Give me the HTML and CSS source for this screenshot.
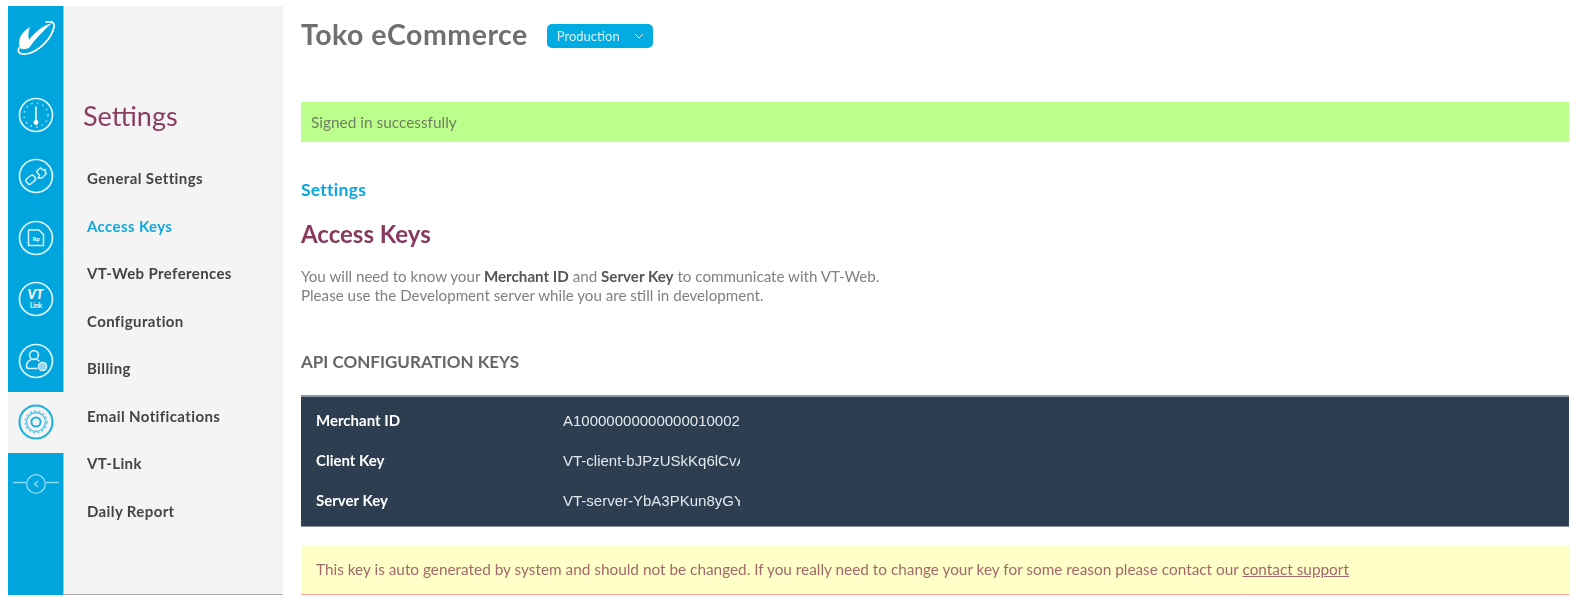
FILE: index.html
```html
<!DOCTYPE html>
<html lang="en">
<head>
<meta charset="utf-8">
<title>Toko eCommerce - Access Keys</title>
<link rel="stylesheet" href="styles.css">
</head>
<body>
<div class="app">
  <nav class="rail">
    <div class="rail-logo">
      <svg class="logo" viewBox="0 0 38 34" fill="none" stroke="#fff" stroke-linecap="round">
        <path d="M2 27 C0 31 3 34 9 33 C22 31 35 17 37 6 C38 1 34 0 29 1" stroke-width="1.7"/>
        <path d="M3 27 C0 20 4 11 13 6 C11 10 11 15 12 19 C18 11 25 5 35 2 C27 9 19 17 12 27 C9 28 5 29 3 27 Z" fill="#fff" stroke="none"/>
      </svg>
    </div>
    <a class="rail-item">
      <svg class="icon" viewBox="0 0 36 36" fill="none" stroke="#d8f5ff">
        <circle cx="18" cy="18" r="16.5" stroke-width="1.7"/>
        <circle cx="18" cy="18" r="12" stroke-width="1.3" stroke-dasharray="1.6 4.1" opacity=".85"/>
        <path d="M18 9.5 V24" stroke-width="1.7"/>
        <circle cx="18" cy="25.5" r="2.4" fill="#fff" stroke="none"/>
      </svg>
    </a>
    <a class="rail-item">
      <svg class="icon" viewBox="0 0 36 36" fill="none" stroke="#d8f5ff">
        <circle cx="18" cy="18" r="16.5" stroke-width="1.7"/>
        <rect x="8" y="18.5" width="9.5" height="6.5" rx="2.4" stroke-width="1.5" transform="rotate(-40 12.7 21.7)"/>
        <path d="M18.5 13.5 L22.5 9.8 L25 12 L27.5 11.5 L27 14 L28.5 15.5 L24 20 L20 20 L21.5 17.5 Z" stroke-width="1.4" stroke-linejoin="round"/>
      </svg>
    </a>
    <a class="rail-item">
      <svg class="icon" viewBox="0 0 36 36" fill="none" stroke="#d8f5ff">
        <circle cx="18" cy="18" r="16.5" stroke-width="1.7"/>
        <path d="M10.5 10 H21 L25.5 14.5 V25.5 H10.5 Z" stroke-width="1.5" stroke-linejoin="round"/>
        <text x="18" y="21" class="icon-mini">Rp</text>
      </svg>
    </a>
    <a class="rail-item">
      <svg class="icon" viewBox="0 0 36 36" fill="none" stroke="#d8f5ff">
        <circle cx="18" cy="18" r="16.5" stroke-width="1.7"/>
        <text x="17.5" y="18" class="icon-vt">VT</text>
        <text x="18" y="26.5" class="icon-link">Link</text>
      </svg>
    </a>
    <a class="rail-item">
      <svg class="icon" viewBox="0 0 36 36" fill="none" stroke="#d8f5ff">
        <circle cx="18" cy="18" r="16.5" stroke-width="1.7"/>
        <circle cx="16" cy="12" r="4.4" stroke-width="1.6"/>
        <path d="M19.5 25.5 H10.5 Q8.5 25.5 8.5 23 Q9 18 13 16.8 M19 16.8 Q20.5 17.3 21.5 18.3" stroke-width="1.6"/>
        <circle cx="24.5" cy="23.5" r="4.2" fill="#8fd8f0" stroke="#d8f5ff" stroke-width="1.2"/>
      </svg>
    </a>
    <a class="rail-item is-active">
      <svg class="icon" viewBox="0 0 36 36" fill="none" stroke="#1fb0e0">
        <circle cx="18" cy="18" r="16.5" stroke-width="2.1"/>
        <circle cx="18" cy="18" r="10.8" stroke-width="1.6" stroke-dasharray="2.4 2" opacity=".6"/>
        <circle cx="18" cy="18" r="9.4" stroke-width="1.2" opacity=".8"/>
        <circle cx="18" cy="18" r="4.6" stroke-width="2"/>
      </svg>
    </a>
    <a class="rail-item">
      <svg class="icon-back" viewBox="0 0 46 20" fill="none" stroke="#8fdcf5" stroke-width="1.3">
        <path d="M0 8.5 H13 M33 8.5 H46"/>
        <circle cx="23" cy="10" r="9.3"/>
        <path d="M25 7 L21.5 10 L25 13" stroke-width="1.4"/>
      </svg>
    </a>
  </nav>

  <aside class="side">
    <h2 class="side-title">Settings</h2>
    <ul class="side-nav">
      <li>General Settings</li>
      <li class="is-current">Access Keys</li>
      <li>VT-Web Preferences</li>
      <li>Configuration</li>
      <li>Billing</li>
      <li>Email Notifications</li>
      <li>VT-Link</li>
      <li>Daily Report</li>
    </ul>
  </aside>

  <main class="main">
    <header class="top">
      <h1 class="brand">Toko eCommerce</h1>
      <button class="env">Production
        <svg class="chev" viewBox="0 0 10 6" fill="none" stroke="#fff" stroke-width="1"><path d="M1 1 L5 5 L9 1"/></svg>
      </button>
    </header>
    <div class="flash">Signed in successfully</div>
    <div class="crumb">Settings</div>
    <h2 class="title">Access Keys</h2>
    <p class="intro">You will need to know your <b>Merchant ID</b> and <b>Server Key</b> to communicate with VT-Web.<br>Please use the Development server while you are still in development.</p>
    <h3 class="section">API CONFIGURATION KEYS</h3>
    <div class="keys">
      <div class="key-row"><span class="key-name">Merchant ID</span><span class="key-value">A10000000000000010002</span></div>
      <div class="key-row"><span class="key-name">Client Key</span><span class="key-value">VT-client-bJPzUSkKq6lCvA</span></div>
      <div class="key-row"><span class="key-name">Server Key</span><span class="key-value">VT-server-YbA3PKun8yGY</span></div>
    </div>
    <div class="notice">This key is auto generated by system and should not be changed. If you really need to change your key for some reason please contact our <a class="notice-link">contact support</a></div>
  </main>
</div>
</body>
</html>
```
FILE: styles.css
```css
* { box-sizing: border-box; }
html, body { margin: 0; height: 100%; background: #fff; overflow: hidden; }
body { font-family: Lato, "Liberation Sans", sans-serif; color: #777; }
.app {
  display: flex;
  height: 589px;
  margin: 6px 15px 0 8px;
  filter: blur(0.6px);
}
.rail {
  width: 56px;
  flex: none;
  display: flex;
  flex-direction: column;
  background: #00a5de;
  border-right: 1px solid #7fd2ee;
}
.rail-logo { height: 78px; flex: none; padding: 15px 0 0 9px; }
.logo { display: block; width: 38px; height: 34px; }
.rail-item { height: 61.5px; flex: none; display: flex; align-items: center; justify-content: center; }
.rail-item.is-active { background: #f4f4f4; margin-right: -1px; }
.icon { width: 36px; height: 36px; display: block; }
.icon-back { width: 46px; height: 20px; display: block; }
.icon-mini { font: 700 6px Lato, sans-serif; fill: #fff; stroke: none; text-anchor: middle; }
.icon-vt { font: italic 900 13px Lato, sans-serif; fill: #fff; stroke: none; text-anchor: middle; }
.icon-link { font: 700 6.5px Lato, sans-serif; fill: #fff; stroke: none; text-anchor: middle; }

.side {
  width: 219px;
  flex: none;
  background: #f4f4f4;
  padding: 92px 0 0 19px;
  border-bottom: 1px solid #aaa;
}
.side-title { margin: 0 0 21px; font-size: 27px; font-weight: 400; line-height: 36px; color: #8a3d62; }
.side-nav { list-style: none; margin: 0; padding: 0 0 0 4px; }
.side-nav li { height: 47.5px; line-height: 47.5px; font-size: 15px; font-weight: 700; letter-spacing: .38px; color: #444; }
.side-nav .is-current { color: #12a8dc; }

.main { flex: 1; min-width: 0; margin-left: 18px; }
.top { display: flex; align-items: center; gap: 19px; height: 40px; margin-top: 8px; }
.brand { margin: 0; font-size: 28.5px; font-weight: 700; letter-spacing: .5px; color: #6f6f6f; }
.env {
  display: flex;
  align-items: center;
  justify-content: space-between;
  width: 106px;
  height: 24px;
  margin-top: 3px;
  padding: 0 9px 0 10px;
  border: 0;
  border-radius: 5px;
  background: #00ace2;
  color: #d8f3fc;
  font: 400 13px Lato, sans-serif;
}
.chev { width: 10px; height: 6px; }
.flash {
  height: 40px;
  margin-top: 48px;
  padding-left: 10px;
  line-height: 41px;
  font-size: 15.4px;
  background: #bdff8c;
  color: #6f7f63;
}
.crumb { margin-top: 37px; font-size: 17.5px; letter-spacing: .25px; line-height: 22px; font-weight: 700; color: #0da6dc; }
.title { margin: 17px 0 0; font-size: 24px; line-height: 32px; font-weight: 700; color: #873a5e; }
.intro { margin: 17px 0 0; font-size: 15.15px; line-height: 19px; color: #808080; }
.intro b { color: #555; }
.section { margin: 46px 0 0; font-size: 17px; line-height: 22px; font-weight: 700; color: #666; }
.keys {
  margin-top: 22px;
  height: 132px;
  padding-top: 3px;
  background: #2c3e50;
  border-top: 2px solid #8b95a0;
  border-bottom: 1px solid #8b95a0;
}
.key-row { display: flex; align-items: center; height: 40px; padding-left: 15px; }
.key-name { width: 247px; flex: none; font-size: 15px; font-weight: 700; color: #fff; }
.key-value {
  width: 177px;
  overflow: hidden;
  white-space: nowrap;
  font-family: "Liberation Sans", sans-serif;
  font-size: 15px;
  color: #e4e8ec;
}
.notice {
  margin-top: 19px;
  height: 49px;
  padding-left: 15px;
  line-height: 46px;
  font-size: 15.35px;
  background: #ffffc8;
  border-bottom: 1px solid #ffa8a0;
  color: #a5686a;
}
.notice-link { text-decoration: underline; }
```
